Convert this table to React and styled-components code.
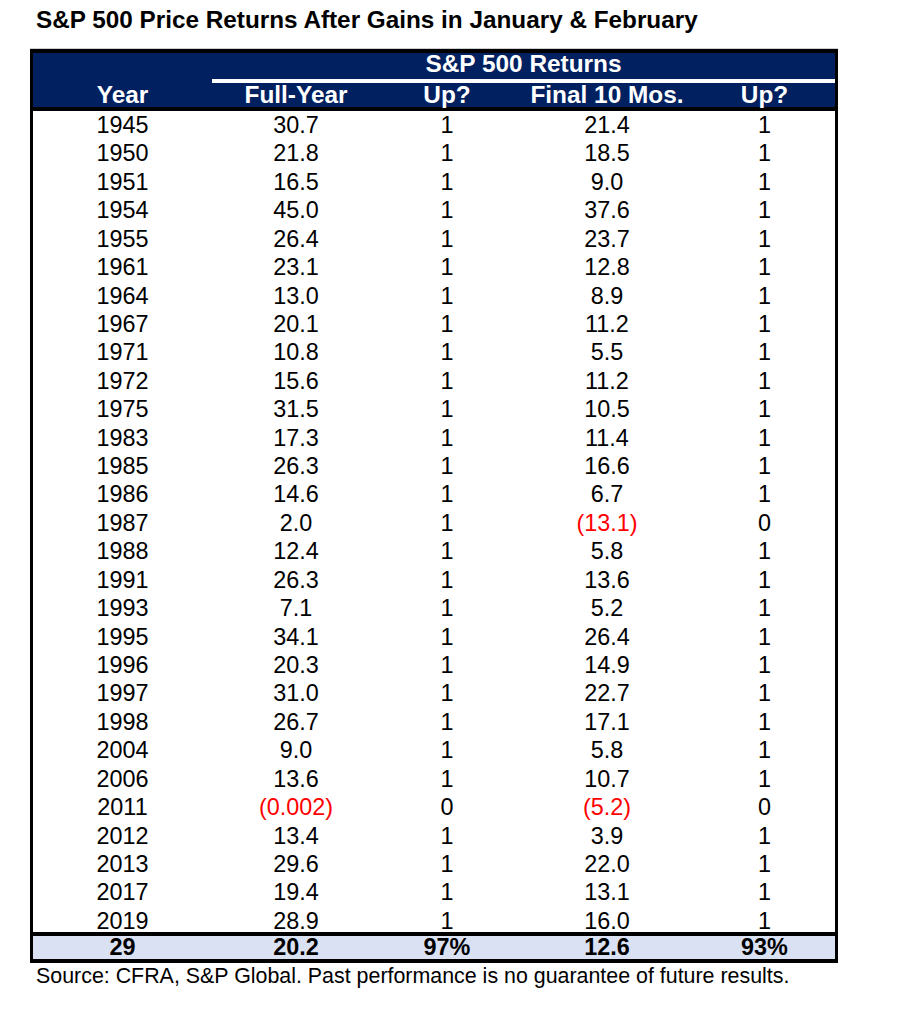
import React from 'react';
import styled, { createGlobalStyle } from 'styled-components';

const GlobalStyle = createGlobalStyle`
	body {
		margin: 0;
		background: #ffffff;
		font-family: 'Liberation Sans', Arial, sans-serif;
		color: #000000;
	}
`;

const COLS = '179px 168px 134px 186px 135px';

const rows = [
	['1945', '30.7', '1', '21.4', '1'],
	['1950', '21.8', '1', '18.5', '1'],
	['1951', '16.5', '1', '9.0', '1'],
	['1954', '45.0', '1', '37.6', '1'],
	['1955', '26.4', '1', '23.7', '1'],
	['1961', '23.1', '1', '12.8', '1'],
	['1964', '13.0', '1', '8.9', '1'],
	['1967', '20.1', '1', '11.2', '1'],
	['1971', '10.8', '1', '5.5', '1'],
	['1972', '15.6', '1', '11.2', '1'],
	['1975', '31.5', '1', '10.5', '1'],
	['1983', '17.3', '1', '11.4', '1'],
	['1985', '26.3', '1', '16.6', '1'],
	['1986', '14.6', '1', '6.7', '1'],
	['1987', '2.0', '1', '(13.1)', '0'],
	['1988', '12.4', '1', '5.8', '1'],
	['1991', '26.3', '1', '13.6', '1'],
	['1993', '7.1', '1', '5.2', '1'],
	['1995', '34.1', '1', '26.4', '1'],
	['1996', '20.3', '1', '14.9', '1'],
	['1997', '31.0', '1', '22.7', '1'],
	['1998', '26.7', '1', '17.1', '1'],
	['2004', '9.0', '1', '5.8', '1'],
	['2006', '13.6', '1', '10.7', '1'],
	['2011', '(0.002)', '0', '(5.2)', '0'],
	['2012', '13.4', '1', '3.9', '1'],
	['2013', '29.6', '1', '22.0', '1'],
	['2017', '19.4', '1', '13.1', '1'],
	['2019', '28.9', '1', '16.0', '1'],
];

const totals = ['29', '20.2', '97%', '12.6', '93%'];

const Page = styled.div`
	padding-top: 6px;
`;

const Title = styled.h1`
	margin: 0 0 15px 36px;
	font-size: 24.3px;
	line-height: 28px;
	font-weight: 700;
`;

const Table = styled.div`
	margin-left: 30px;
	width: 802px;
	border: 3px solid #000000;
	border-top-width: 4px;
	border-bottom-width: 4px;
	box-shadow: 0 -1px 0 #cfcfcf;
`;

const Header = styled.div`
	background: #002060;
	color: #ffffff;
	font-weight: 700;
	font-size: 24.4px;
	border-bottom: 4px solid #000000;
`;

const GroupRow = styled.div`
	display: grid;
	grid-template-columns: 179px 1fr;
	height: 30px;
	line-height: 21px;
`;

const GroupLabel = styled.div`
	grid-column: 2;
	text-align: center;
	border-bottom: 4px solid #ffffff;
`;

const Row = styled.div`
	display: grid;
	grid-template-columns: ${COLS};
	height: ${(p) => p.$h};
	line-height: ${(p) => p.$h};
	background: ${(p) => p.$bg || 'transparent'};
	font-weight: ${(p) => (p.$bold ? 700 : 400)};
	font-size: ${(p) => p.$size || '23.4px'};
`;

const Cell = styled.div`
	text-align: center;
	white-space: nowrap;
	color: ${(p) => (p.$neg ? '#ff0000' : 'inherit')};
	&:last-child {
		padding-right: 6px;
	}
`;

const Body = styled.div`
	display: grid;
	grid-auto-rows: 28.43px;
	height: 821px;
`;

const Footer = styled.div`
	border-top: 4px solid #000000;
`;

const Source = styled.div`
	margin-left: 36px;
	font-size: 21.4px;
	line-height: 26px;
`;

const App = () => {
	return (
		<Page>
			<GlobalStyle />
			<Title>S&amp;P 500 Price Returns After Gains in January &amp; February</Title>
			<Table>
				<Header>
					<GroupRow>
						<GroupLabel>S&amp;P 500 Returns</GroupLabel>
					</GroupRow>
					<Row $h="24px" $size="24.4px" $bold>
						<Cell>Year</Cell>
						<Cell>Full-Year</Cell>
						<Cell>Up?</Cell>
						<Cell>Final 10 Mos.</Cell>
						<Cell>Up?</Cell>
					</Row>
				</Header>
				<Body>
					{rows.map((r) => (
						<Row key={r[0]} $h="28.43px">
							{r.map((v, i) => (
								<Cell key={i} $neg={v.startsWith('(')}>
									{v}
								</Cell>
							))}
						</Row>
					))}
				</Body>
				<Footer>
					<Row $h="23px" $bg="#dae1f3" $bold>
						{totals.map((v, i) => (
							<Cell key={i}>{v}</Cell>
						))}
					</Row>
				</Footer>
			</Table>
			<Source>Source: CFRA, S&amp;P Global. Past performance is no guarantee of future results.</Source>
		</Page>
	);
};

export default App;
